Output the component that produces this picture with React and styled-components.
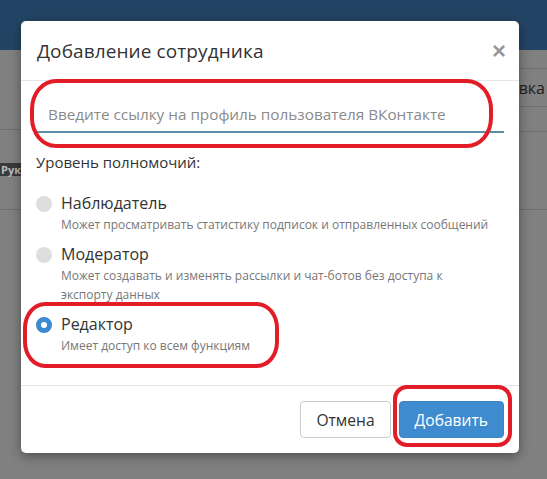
import React, { useState } from 'react';
import styled, { createGlobalStyle } from 'styled-components';

const GlobalStyle = createGlobalStyle`
    html, body { margin:0; padding:0; }
    body { width:547px; height:479px; overflow:hidden; background:#808080;
        font-family: 'Open Sans', 'Noto Sans', sans-serif; }
`

const Page = styled.div`
    position:relative; width:547px; height:479px;
    display:flex; flex-direction:column;
`

const TopBar = styled.div`
    height:50px; background-color:#234565;
`

const Main = styled.div`
    display:grid; grid-template-columns: 21px 1fr 220px;
`

const Column = styled.div`
    display:flex; flex-direction:column;
`

const Row = styled.div`
    height:${p => p.h}px; box-sizing:border-box; padding-right:${p => p.end ? '2px' : '0'};
    border-bottom:${p => p.line ? '1px solid #6e6e6e' : '0'};
    display:flex; align-items:center; justify-content:${p => p.end ? 'flex-end' : 'flex-start'};
    font-size:16px; color:#1e1e1e; white-space:nowrap;
`

const RoleBadge = styled.span`
    background-color:#3a3a3a; color:#bdbdbd;
    font-size:11px; font-weight:700; line-height:13px; padding:0 1px;
    font-family: 'Open Sans', sans-serif;
`

const Modal = styled.div`
    position:absolute; left:21px; top:21px; width:498px;
    background-color:#fff; border-radius:5px;
    box-shadow: 0 3px 12px rgba(0,0,0,0.4);
    color:#333;
`

const Header = styled.div`
    display:flex; align-items:center; justify-content:space-between;
    padding:15px 15px 14px 16px; border-bottom:1px solid #e5e5e5;
`

const Title = styled.h4`
    margin:0; font-size:19px; line-height:30px; font-weight:400; color:#333;
    letter-spacing:0.1px;
`

const Close = styled.button`
    border:0; background:none; padding:0; margin-right:-2px;
    font-size:24px; line-height:24px; font-weight:700; color:#000; opacity:0.4;
    font-family: 'Liberation Sans', Arial, sans-serif; cursor:pointer;
`

const Body = styled.div`
    padding:15px 15px 30px 15px;
`

const LinkInput = styled.input`
    display:block; width:100%; height:37px; box-sizing:border-box;
    border:0; border-bottom:2px solid #5e8ea6; outline:none;
    padding:0 12px; font-size:15.3px; color:#333;
    font-family: 'Open Sans', sans-serif;
    &::placeholder { color:#8a8a8a; }
`

const Caption = styled.div`
    margin-top:19px; font-size:15px; line-height:20px; color:#333;
`

const Options = styled.div`
    margin-top:20px; display:flex; flex-direction:column; gap:9px;
`

const Option = styled.label`
    display:grid; grid-template-columns:16px 1fr; column-gap:9px; cursor:pointer;
`

const Dot = styled.span`
    width:16px; height:16px; margin-top:4px; border-radius:50%; box-sizing:border-box;
    background-color:${p => p.checked ? '#fff' : '#dedede'};
    border:${p => p.checked ? '5px solid #3b8ad2' : '0'};
`

const OptionName = styled.div`
    font-size:16px; line-height:23px; color:#333;
`

const OptionText = styled.div`
    grid-column:2; font-size:12px; line-height:19px; color:#777; white-space:nowrap;
`

const Footer = styled.div`
    display:flex; justify-content:flex-end; gap:8px;
    padding:15px; border-top:1px solid #e5e5e5;
`

const Button = styled.button`
    height:37px; padding:0 15px; border-radius:4px; font-size:15.6px;
    font-family: 'Open Sans', sans-serif; cursor:pointer;
    border:1px solid ${p => p.primary ? '#3b85c6' : '#ccc'};
    background-color:${p => p.primary ? '#3e8bd0' : '#fff'};
    color:${p => p.primary ? '#fff' : '#333'};
`

const Mark = styled.div`
    position:absolute; box-sizing:border-box; pointer-events:none;
    border:4px solid #e21d28; border-radius:${p => p.r};
    left:${p => p.x}px; top:${p => p.y}px; width:${p => p.w}px; height:${p => p.h}px;
`

const roles = [
    { id: 'viewer', name: 'Наблюдатель', text: ['Может просматривать статистику подписок и отправленных сообщений'] },
    { id: 'moderator', name: 'Модератор', text: ['Может создавать и изменять рассылки и чат-ботов без доступа к', 'экспорту данных'] },
    { id: 'editor', name: 'Редактор', text: ['Имеет доступ ко всем функциям'] },
];

function App () {
    const [role, setRole] = useState('editor');
    const [link, setLink] = useState('');

    return (
        <Page>
            <GlobalStyle />
            <TopBar />
            <Main>
                <Column>
                    <Row h={80} line />
                    <Row h={80} line><RoleBadge>Руко</RoleBadge></Row>
                </Column>
                <div />
                <Column>
                    <Row h={19} line />
                    <Row h={38} line end>Отправка</Row>
                    <Row h={25} line />
                    <Row h={78} line />
                </Column>
            </Main>

            <Modal>
                <Header>
                    <Title>Добавление сотрудника</Title>
                    <Close>×</Close>
                </Header>
                <Body>
                    <LinkInput
                        type="text" value={link} onChange={e => setLink(e.target.value)}
                        placeholder="Введите ссылку на профиль пользователя ВКонтакте" />
                    <Caption>Уровень полномочий:</Caption>
                    <Options>
                        {roles.map(r => (
                            <Option key={r.id} onClick={() => setRole(r.id)}>
                                <Dot checked={role === r.id} />
                                <OptionName>{r.name}</OptionName>
                                <OptionText>
                                    {r.text.map((t, i) => <div key={i}>{t}</div>)}
                                </OptionText>
                            </Option>
                        ))}
                    </Options>
                </Body>
                <Footer>
                    <Button>Отмена</Button>
                    <Button primary>Добавить</Button>
                </Footer>

                <Mark x={9} y={58} w={463} h={69} r="26px / 30px" />
                <Mark x={2} y={281} w={256} h={66} r="22px / 26px" />
                <Mark x={372} y={364} w={119} h={62} r="14px" />
            </Modal>
        </Page>
    );
}

export default App;
